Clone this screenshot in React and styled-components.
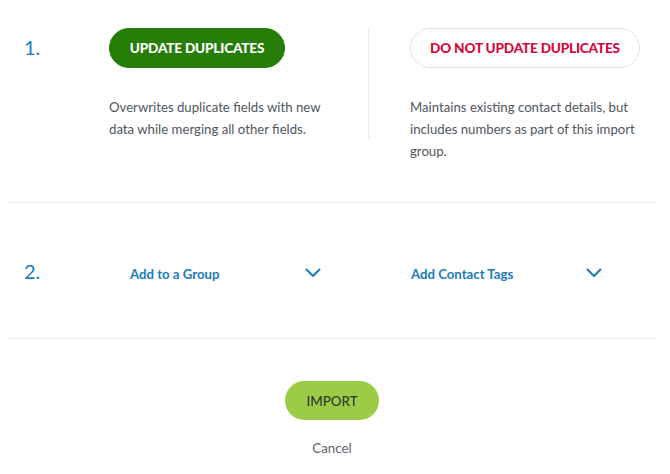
import React from 'react';
import styled, { createGlobalStyle } from 'styled-components';

const GlobalStyle = createGlobalStyle`
    body {
        margin: 8px;
        background: #ffffff;
        font-family: Lato, "Open Sans", sans-serif;
    }
`;

const Wrapper = styled.div`
    width: 648px;
`;

const Section = styled.div`
    display: grid;
    grid-template-columns: 101px 259px 1px 1fr;
    align-items: ${(p) => (p.center ? 'center' : 'start')};
    height: ${(p) => p.height}px;
    padding-top: ${(p) => p.top || 0}px;
    box-sizing: border-box;
    border-bottom: 1px solid #e9e9e9;
`;

const StepNumber = styled.div`
    padding-left: 16px;
    padding-top: ${(p) => p.offset || 0}px;
    font-size: 20px;
    line-height: 24px;
    color: #1b80c0;
`;

const Option = styled.div`
    padding-left: ${(p) => p.indent || 0}px;
`;

const Divider = styled.div`
    width: 1px;
    height: 112px;
    margin-top: -1px;
    background: #ebebeb;
`;

const Pill = styled.button`
    display: block;
    height: 40px;
    width: ${(p) => p.width}px;
    border-radius: 20px;
    border: 1px solid ${(p) => (p.primary ? '#267d07' : '#e4e4e4')};
    background: ${(p) => (p.primary ? '#267d07' : '#ffffff')};
    color: ${(p) => (p.primary ? '#ffffff' : '#d20a3c')};
    font-family: Lato, sans-serif;
    font-weight: 900;
    font-size: 13.6px;
    letter-spacing: -0.2px;
    padding: 0;
    cursor: pointer;
`;

const Description = styled.p`
    margin: 28px 0 0;
    font-size: 13.2px;
    line-height: 22px;
    color: #505660;
    max-width: ${(p) => p.max}px;
`;

const Dropdown = styled.div`
    display: flex;
    align-items: center;
    justify-content: space-between;
    width: 191px;
    margin-left: ${(p) => p.indent || 0}px;
    margin-top: 3px;
    color: #1b7bbb;
    font-weight: 700;
    font-size: 13.2px;
    cursor: pointer;

    span {
        margin-top: 4px;
    }

    svg {
        margin-top: 2px;
    }
`;

const Footer = styled.div`
    display: flex;
    flex-direction: column;
    align-items: center;
    padding-top: 42px;
`;

const ImportButton = styled.button`
    width: 94px;
    height: 39px;
    border: none;
    border-radius: 20px;
    background: #9ccb46;
    color: #2f3a30;
    font-family: Lato, sans-serif;
    font-size: 13.4px;
    font-weight: 500;
    padding: 0;
    cursor: pointer;
`;

const CancelLink = styled.a`
    margin-top: 20px;
    font-size: 13.4px;
    color: #5f6368;
    cursor: pointer;
`;

const Chevron = () => (
    <svg width="16" height="10" viewBox="0 0 16 10" fill="none">
        <path d="M1.5 1.5 L8 8 L14.5 1.5" stroke="#1b7bbb" strokeWidth="2" strokeLinecap="round" strokeLinejoin="round" />
    </svg>
);

const App = () => {
    return (
        <Wrapper>
            <GlobalStyle />
            <Section height={195} top={20}>
                <StepNumber offset={7}>1.</StepNumber>
                <Option>
                    <Pill primary width={176}>UPDATE DUPLICATES</Pill>
                    <Description max={225}>
                        Overwrites duplicate fields with new data while merging all other fields.
                    </Description>
                </Option>
                <Divider />
                <Option indent={41}>
                    <Pill width={230}>DO NOT UPDATE DUPLICATES</Pill>
                    <Description max={230}>
                        Maintains existing contact details, but includes numbers as part of this import group.
                    </Description>
                </Option>
            </Section>

            <Section height={136} center>
                <StepNumber>2.</StepNumber>
                <Dropdown indent={21}>
                    <span>Add to a Group</span>
                    <Chevron />
                </Dropdown>
                <div />
                <Dropdown indent={42}>
                    <span>Add Contact Tags</span>
                    <Chevron />
                </Dropdown>
            </Section>

            <Footer>
                <ImportButton>IMPORT</ImportButton>
                <CancelLink>Cancel</CancelLink>
            </Footer>
        </Wrapper>
    );
};

export default App;
